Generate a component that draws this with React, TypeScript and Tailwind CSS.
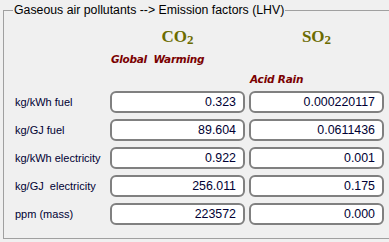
import React from "react";

const rows = [
  { label: "kg/kWh fuel", co2: "0.323", so2: "0.000220117" },
  { label: "kg/GJ fuel", co2: "89.604", so2: "0.0611436" },
  { label: "kg/kWh electricity", co2: "0.922", so2: "0.001" },
  { label: "kg/GJ  electricity", co2: "256.011", so2: "0.175" },
  { label: "ppm (mass)", co2: "223572", so2: "0.000" },
];

function Box({ value }: { value: string }) {
  return (
    <div className="h-[22px] w-[135px] shrink-0 rounded-[6px] border-2 border-[#808080] bg-white flex items-center justify-end pr-[7px] text-[12.4px] text-[#000033] [font-family:'Liberation_Sans',sans-serif] whitespace-pre">
      {value}
    </div>
  );
}

export default function App() {
  return (
    <div className="w-[389px] h-[242px] bg-[#f0f0f0] overflow-hidden [font-family:'Liberation_Sans',sans-serif]">
      <div className="w-[440px]">
        <fieldset className="ml-[3px] mt-[3px] w-[430px] min-w-[430px] h-[236px] border border-[#a0a0a0] pl-[11px]">
          <legend className="text-[12.3px] text-black leading-[15px] px-[1px] -ml-[2px]">
            Gaseous air pollutants --&gt; Emission factors (LHV)
          </legend>
          <div className="flex flex-col">
            <div className="flex h-[20px] mt-[9px] items-end">
              <div className="w-[95px] shrink-0" />
              <div className="w-[135px] shrink-0 flex justify-center">
                <span className="[font-family:'Liberation_Serif',serif] font-bold text-[17px] leading-[18px] text-[#6b6b00]">
                  CO<span className="text-[13px] relative top-[2px]">2</span>
                </span>
              </div>
              <div className="w-[4px] shrink-0" />
              <div className="w-[135px] shrink-0 flex justify-center">
                <span className="[font-family:'Liberation_Serif',serif] font-bold text-[17px] leading-[18px] text-[#6b6b00]">
                  SO<span className="text-[13px] relative top-[2px]">2</span>
                </span>
              </div>
            </div>
            <div className="flex h-[12px] mt-[6px] items-center">
              <div className="w-[96px] shrink-0" />
              <span className="font-bold italic text-[10.5px] leading-[12px] text-[#7a0000] whitespace-pre [font-family:'DejaVu_Sans',sans-serif] tracking-[-0.3px]">
                Global  Warming
              </span>
            </div>
            <div className="flex h-[12px] mt-[8px] items-center">
              <div className="w-[235px] shrink-0" />
              <span className="font-bold italic text-[10.5px] leading-[12px] text-[#7a0000] [font-family:'DejaVu_Sans',sans-serif] tracking-[-0.2px]">
                Acid Rain
              </span>
            </div>
            <div className="flex flex-col gap-[6px] mt-[6px]">
              {rows.map((r) => (
                <div key={r.label} className="flex items-center">
                  <div className="w-[95px] shrink-0 text-[11px] text-[#000033] whitespace-pre">{r.label}</div>
                  <Box value={r.co2} />
                  <div className="w-[4px] shrink-0" />
                  <Box value={r.so2} />
                </div>
              ))}
            </div>
          </div>
        </fieldset>
      </div>
    </div>
  );
}
